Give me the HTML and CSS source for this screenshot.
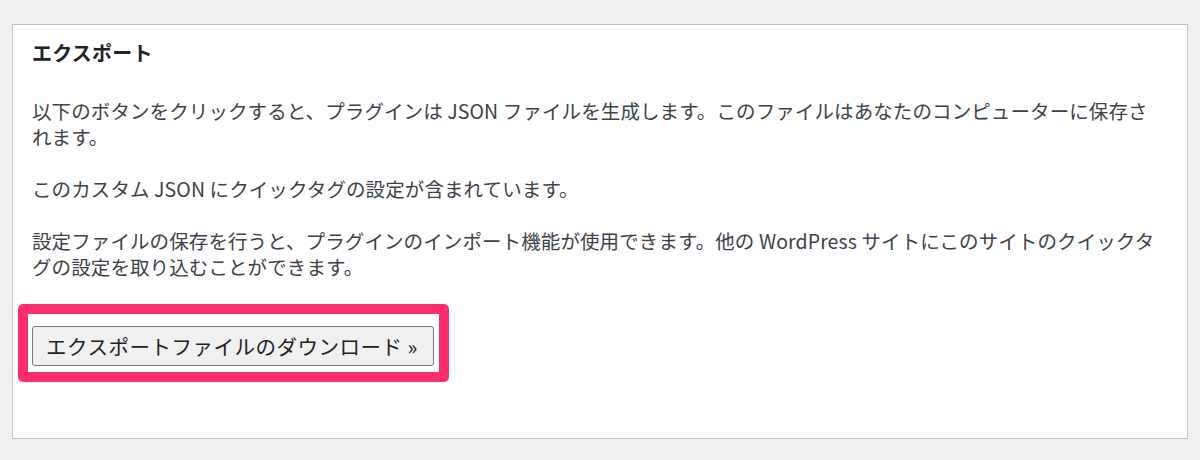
FILE: index.html
```html
<!DOCTYPE html>
<html lang="ja">
<head>
    <meta charset="UTF-8">
    <meta name="viewport" content="width=device-width, initial-scale=1.0">
    <title>エクスポート</title>
    <link rel="stylesheet" href="styles.css">
</head>
<body>
    <div class="postbox">
        <h2 class="postbox-title">エクスポート</h2>

        <p>以下のボタンをクリックすると、プラグインは JSON ファイルを生成します。このファイルはあなたのコンピューターに保存されます。</p>

        <p>このカスタム JSON にクイックタグの設定が含まれています。</p>

        <p>設定ファイルの保存を行うと、プラグインのインポート機能が使用できます。他の WordPress サイトにこのサイトのクイックタグの設定を取り込むことができます。</p>

        <!-- highlighted export button -->
        <div class="highlight">
            <button type="button" class="button">エクスポートファイルのダウンロード »</button>
        </div>
    </div>
</body>
</html>
```

FILE: styles.css
```css
body {
    margin: 0;
    padding: 24px 12px 20px;
    background-color: #f0f0f1;
    font-family: "Noto Sans CJK JP", sans-serif;
    color: #3c434a;
}
.postbox {
    background-color: #fff;
    border: 1px solid #c3c4c7;
    padding: 15px 32px 56px 19px;
}
.postbox-title {
    margin: 0 0 32px;
    font-size: 20px;
    line-height: 26px;
    letter-spacing: 0.2px;
    font-weight: bold;
    color: #1d2327;
}
.postbox p {
    margin: 0 0 26px;
    font-size: 19.5px;
    line-height: 26px;
    letter-spacing: 0.1px;
}
.highlight {
    display: inline-block;
    margin-left: -14px;
    margin-top: -2px;
    padding: 12px 5px 6px 4px;
    border: 10px solid #fd2e6c;
    border-radius: 5px;
}
.button {
    display: block;
    height: 40px;
    padding: 0 15px 0 13px;
    font-family: "Noto Sans CJK JP", sans-serif;
    font-size: 20.5px;
    letter-spacing: 0.5px;
    color: #1d2327;
    background-color: #f0f0f0;
    border: 1px solid #787878;
    border-radius: 3px;
    cursor: pointer;
}
```
